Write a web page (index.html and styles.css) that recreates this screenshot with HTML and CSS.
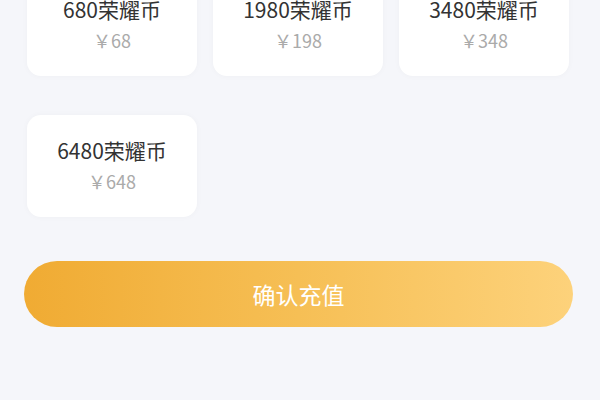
FILE: index.html
```html
<!DOCTYPE html>
<html lang="zh-CN">
<head>
    <meta charset="UTF-8">
    <meta name="viewport" content="width=device-width, initial-scale=1.0">
    <title>充值</title>
    <link rel="stylesheet" href="styles.css">
</head>
<body>
<div class="page">
    <div class="packs">
        <div class="pack">
            <div class="pack-name">680荣耀币</div>
            <div class="pack-price">￥68</div>
        </div>
        <div class="pack">
            <div class="pack-name">1980荣耀币</div>
            <div class="pack-price">￥198</div>
        </div>
        <div class="pack">
            <div class="pack-name">3480荣耀币</div>
            <div class="pack-price">￥348</div>
        </div>
        <div class="pack">
            <div class="pack-name">6480荣耀币</div>
            <div class="pack-price">￥648</div>
        </div>
    </div>
    <button class="confirm" type="button">确认充值</button>
</div>
</body>
</html>
```

FILE: styles.css
```css
html, body {
    margin: 0;
    padding: 0;
    height: 100%;
    background-color: #f5f6fa;
    font-family: "Noto Sans CJK SC", "Noto Sans", sans-serif;
    overflow: hidden;
}

.page {
    padding: 0 27px 0 24px;
}

.packs {
    display: grid;
    grid-template-columns: repeat(3, 170px);
    column-gap: 16px;
    row-gap: 39px;
    margin-top: -26px;
    padding-left: 3px;
}

.pack {
    box-sizing: border-box;
    height: 102px;
    padding-bottom: 3px;
    background-color: #fff;
    border-radius: 14px;
    box-shadow: 0 0 6px rgba(0, 0, 0, 0.03);
    display: flex;
    flex-direction: column;
    align-items: center;
    justify-content: center;
    gap: 7px;
}

.pack-name {
    font-size: 21px;
    line-height: 26px;
    color: #333;
}

.pack-price {
    font-size: 18px;
    line-height: 22px;
    color: #aaa;
}

.confirm {
    display: block;
    width: 549px;
    height: 66px;
    margin-top: 44px;
    border: none;
    border-radius: 33px;
    background: linear-gradient(90deg, #f0ab33 0%, #f6bf55 50%, #fdd27b 100%);
    color: #fff;
    font-family: inherit;
    font-size: 23px;
    cursor: pointer;
}
```
